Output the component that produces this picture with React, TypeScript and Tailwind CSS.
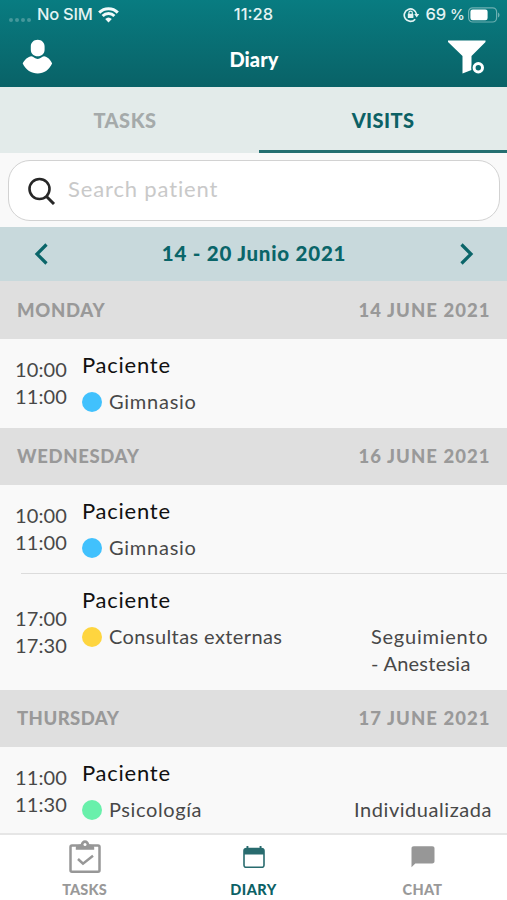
import React from "react";

type Visit = {
  start: string;
  end: string;
  place: string;
  placeClass: string;
  dot: string;
  detail?: React.ReactNode;
  height: string;
};

const MONDAY: Visit[] = [
  { start: "10:00", end: "11:00", place: "Gimnasio", placeClass: "tracking-[0.75px]", dot: "bg-[#41c1fd]", height: "h-[89px]" },
];
const WEDNESDAY: Visit[] = [
  { start: "10:00", end: "11:00", place: "Gimnasio", placeClass: "tracking-[0.75px]", dot: "bg-[#41c1fd]", height: "h-[88px]" },
  {
    start: "17:00",
    end: "17:30",
    place: "Consultas externas",
    placeClass: "tracking-[0.4px]",
    dot: "bg-[#fed53f]",
    detail: (
      <span className="mr-[16px] w-[120px]">
        <span className="tracking-[0.75px]">Seguimiento</span>
        <br />
        <span className="tracking-[0.25px]">- Anestesia</span>
      </span>
    ),
    height: "h-[116px]",
  },
];
const THURSDAY: Visit[] = [
  {
    start: "11:00",
    end: "11:30",
    place: "Psicología",
    placeClass: "tracking-[0.6px]",
    dot: "bg-[#69f0ab]",
    detail: <span className="mr-[15px]">Individualizada</span>,
    height: "h-[88px]",
  },
];

function StatusBar() {
  return (
    <div className="grid h-[29px] grid-cols-3 items-center font-['Inter',sans-serif] text-[16.5px] font-medium leading-none text-[#e4f3f3]">
      <div className="flex items-center pl-[9px]">
        <span className="mr-[6px] flex gap-[2px] pt-[10px]">
          {[0, 1, 2, 3].map((i) => (
            <i key={i} className="size-[4px] rounded-full bg-[#45989b]" />
          ))}
        </span>
        <span className="whitespace-nowrap tracking-[-0.25px]">No SIM</span>
        <svg className="ml-[5px]" width="21" height="16" viewBox="0 0 21 16" fill="none" stroke="#f2fafa" strokeWidth="3">
          <path d="M1.2 5.6a13.2 13.2 0 0 1 18.6 0" />
          <path d="M4.6 9a8.4 8.4 0 0 1 11.8 0" />
          <path d="M10.5 15.6 7.2 12.1a4.8 4.8 0 0 1 6.6 0Z" fill="#f2fafa" stroke="none" />
        </svg>
      </div>
      <div className="text-center">11:28</div>
      <div className="flex items-center justify-end pr-[7px]">
        <svg className="mr-[6px]" width="17" height="16" viewBox="0 0 17 16" fill="none" stroke="#e4f3f3" strokeWidth="1.7">
          <path d="M12.2 12.2A6.2 6.2 0 1 1 13.600 7.400" />
          <path d="M11.200 7h5l-2.500 3.500Z" fill="#e4f3f3" stroke="none" />
          <rect x="4.800" y="6.800" width="5.600" height="4.300" rx=".6" fill="#e4f3f3" stroke="none" />
          <path d="M5.900 7V5.800a1.700 1.700 0 0 1 3.400 0V7" strokeWidth="1.100" />
        </svg>
        <span className="mr-[3px] whitespace-nowrap">
          <span className="tracking-[-0.1px]">69</span>
          <span className="ml-[4px] text-[15px]">%</span>
        </span>
        <svg width="32" height="16" viewBox="0 0 32 16">
          <rect x=".6" y=".8" width="28" height="14.2" rx="4" fill="none" stroke="#6db0b2" strokeWidth="1.2" />
          <rect x="2.4" y="2.6" width="17.2" height="10.6" rx="2.2" fill="#fff" />
          <path d="M30 5.4c2 .9 2 4.1 0 5Z" fill="#6db0b2" />
        </svg>
      </div>
    </div>
  );
}

function DayHeader({ day, date, height, dayClass }: { day: string; date: string; height: string; dayClass: string }) {
  return (
    <div className={`flex ${height} shrink-0 items-center justify-between bg-[#dfdfdf] pl-[17px] pr-[16.5px] pt-px text-[18.5px] font-black text-[#999]`}>
      <span className={dayClass}>{day}</span>
      <span className="tracking-[1.05px]">{date}</span>
    </div>
  );
}

function VisitRow({ v }: { v: Visit }) {
  return (
    <div className={`flex ${v.height} shrink-0 text-[20px] leading-[27px] text-[#484848]`}>
      <div className="flex w-[82px] flex-col justify-center pb-px pl-[15px] tracking-[0.1px]">
        <span>{v.start}</span>
        <span>{v.end}</span>
      </div>
      <div className="flex flex-1 flex-col pt-[12px]">
        <span className="text-[22px] tracking-[0.75px] text-[#111]">Paciente</span>
        <div className="mt-[10px] flex items-start justify-between tracking-[0.55px]">
          <span className="flex items-center">
            <i className={`mr-[7px] mt-px size-[20px] rounded-full ${v.dot}`} />
            <span className={v.placeClass}>{v.place}</span>
          </span>
          {v.detail}
        </div>
      </div>
    </div>
  );
}

export default function App() {
  return (
    <div className="flex h-[900px] w-[507px] flex-col overflow-hidden bg-[#f9f9f9] font-['Lato',sans-serif]">
      <header className="h-[87px] shrink-0 bg-linear-to-b from-[#087c81] to-[#096267]">
        <StatusBar />
        <div className="flex h-[58px] items-center justify-between pb-[2px] pl-[22px] pr-[21px]">
          <svg width="31" height="36" viewBox="0 0 31 36" fill="#fff">
            <path d="M15.7 0.7c4 0 6.9 2.8 6.9 6.8v3.2c0 3.8-3 6.6-6.9 6.6s-6.9-2.8-6.9-6.6V7.5c0-4 2.9-6.8 6.9-6.8Z" />
            <path d="M9.4 17.3c2.2 0 3.7 2.8 6.3 2.8s4.1-2.8 6.3-2.8c3 0 7 3.8 8.1 7.2-3 6.700-8.200 9.900-14.400 9.900S3.700 31.200.7 24.500c1.400-3.400 5.700-7.200 8.700-7.200Z" />
          </svg>
          <h1 className="pl-[7px] pt-[3px] text-[20px] font-black tracking-[0.1px] text-white">Diary</h1>
          <svg width="38" height="36" viewBox="0 0 38 36">
            <path d="M0 1.500h37.500v1.500L23.500 17v14L14.500 34.500V17L0 3Z" fill="#fff" />
            <circle cx="30.300" cy="28.700" r="6.900" fill="#096b70" />
            <circle cx="30.300" cy="28.700" r="4.200" fill="none" stroke="#fff" strokeWidth="3" />
          </svg>
        </div>
      </header>

      <nav className="grid h-[66px] shrink-0 grid-cols-[259px_1fr] bg-[#e3ebea] text-[20px] font-black">
        <div className="flex items-center justify-center pb-px pr-[9px] tracking-[0.5px] text-[#a5aaaa]">TASKS</div>
        <div className="flex items-center justify-center border-b-[3px] border-[#256f71] pt-[2px] tracking-[0.4px] text-[#0c6165]">VISITS</div>
      </nav>

      <div className="h-[74px] shrink-0 px-[8px] pt-[7px]">
        <div className="flex h-[61px] w-[492px] items-center rounded-[22px] border-[1.5px] border-[#d2d2d2] bg-white pl-[19px]">
          <svg width="28" height="28" viewBox="0 0 28 28" fill="none" stroke="#272727" strokeWidth="2.6">
            <circle cx="11.5" cy="12" r="10" />
            <path d="M18.5 19.5 26 27" strokeWidth="3" />
          </svg>
          <span className="ml-[12px] pb-[5px] text-[22px] tracking-[0.85px] text-[#c9c9c9]">Search patient</span>
        </div>
      </div>

      <div className="flex h-[54px] shrink-0 items-center justify-between bg-[#c8d9dc] pl-[34px] pr-[33px] text-[#0a6569]">
        <svg width="15" height="22" viewBox="0 0 15 22" fill="none" stroke="currentColor" strokeWidth="3.2">
          <path d="M12.500 1.500 3 11l9.500 9.500" />
        </svg>
        <span className="pb-[2px] text-[20.5px] font-black tracking-[0.77px]">14 - 20 Junio 2021</span>
        <svg width="15" height="22" viewBox="0 0 15 22" fill="none" stroke="currentColor" strokeWidth="3.2">
          <path d="m2.500 1.500 9.500 9.500-9.500 9.500" />
        </svg>
      </div>

      <main className="flex h-[552px] shrink-0 flex-col overflow-hidden">
        <DayHeader day="MONDAY" date="14 JUNE 2021" height="h-[58px]" dayClass="tracking-[0.7px]" />
        <VisitRow v={MONDAY[0]} />
        <DayHeader day="WEDNESDAY" date="16 JUNE 2021" height="h-[57px]" dayClass="tracking-[0.65px]" />
        <VisitRow v={WEDNESDAY[0]} />
        <div className="ml-[21px] h-px shrink-0 bg-[#dcdcdc]" />
        <VisitRow v={WEDNESDAY[1]} />
        <DayHeader day="THURSDAY" date="17 JUNE 2021" height="h-[57px]" dayClass="tracking-[0.45px]" />
        <VisitRow v={THURSDAY[0]} />
      </main>

      <footer className="grid h-[67px] shrink-0 grid-cols-3 border-t-2 border-[#e6e6e6] bg-white text-[14.5px] font-black text-[#999]">
        <div className="flex flex-col items-center">
          <svg className="mt-[5px]" width="32" height="34" viewBox="0 0 32 34" fill="none" stroke="#979797" strokeWidth="2.5">
            <rect x="1.5" y="5.5" width="29" height="26.3" rx="1.5" />
            <path d="M6.8 9.8V7.6c0-1.9 2-2.9 4.8-3.1C12.200 2 13.700.3 16 .3s3.800 1.700 4.400 4.200c2.800.2 4.800 1.200 4.800 3.100v2.200Z" fill="#979797" stroke="none" />
            <circle cx="16" cy="4.400" r="1.500" fill="#fff" stroke="none" />
            <path d="m9 19 5 4.700 10-8" />
          </svg>
          <span className="mt-[5px] leading-[21px] tracking-[0.15px]">TASKS</span>
        </div>
        <div className="flex flex-col items-center text-[#0c6165]">
          <svg className="mt-[11px]" width="24" height="24" viewBox="0 0 24 24">
            <path d="M4.500 0h1.900v1.800h11.200V0h1.900v1.800c2.100 0 3.300 1 3.300 3V19c0 2-1.100 3.100-3.100 3.100H4.300c-2 0-3.100-1.100-3.100-3.100V4.800c0-2 1.200-3 3.300-3ZM2.800 8.600V19c0 1 .5 1.500 1.500 1.500h15.400c1 0 1.500-.5 1.500-1.500V8.600Z" fill="#286b6e" />
          </svg>
          <span className="mt-[9px] leading-[21px] tracking-[0.45px]">DIARY</span>
        </div>
        <div className="flex flex-col items-center">
          <svg className="mt-[11px]" width="24" height="24" viewBox="0 0 24 24">
            <path d="M2.800.2h18.400c1.500 0 2.300.8 2.300 2.200v12.800c0 1.400-.8 2.200-2.300 2.200H4.300L.5 21.300V2.400C.5 1 1.300.2 2.800.2Z" fill="#979797" />
          </svg>
          <span className="mt-[9px] leading-[21px] tracking-[0.3px]">CHAT</span>
        </div>
      </footer>
    </div>
  );
}
